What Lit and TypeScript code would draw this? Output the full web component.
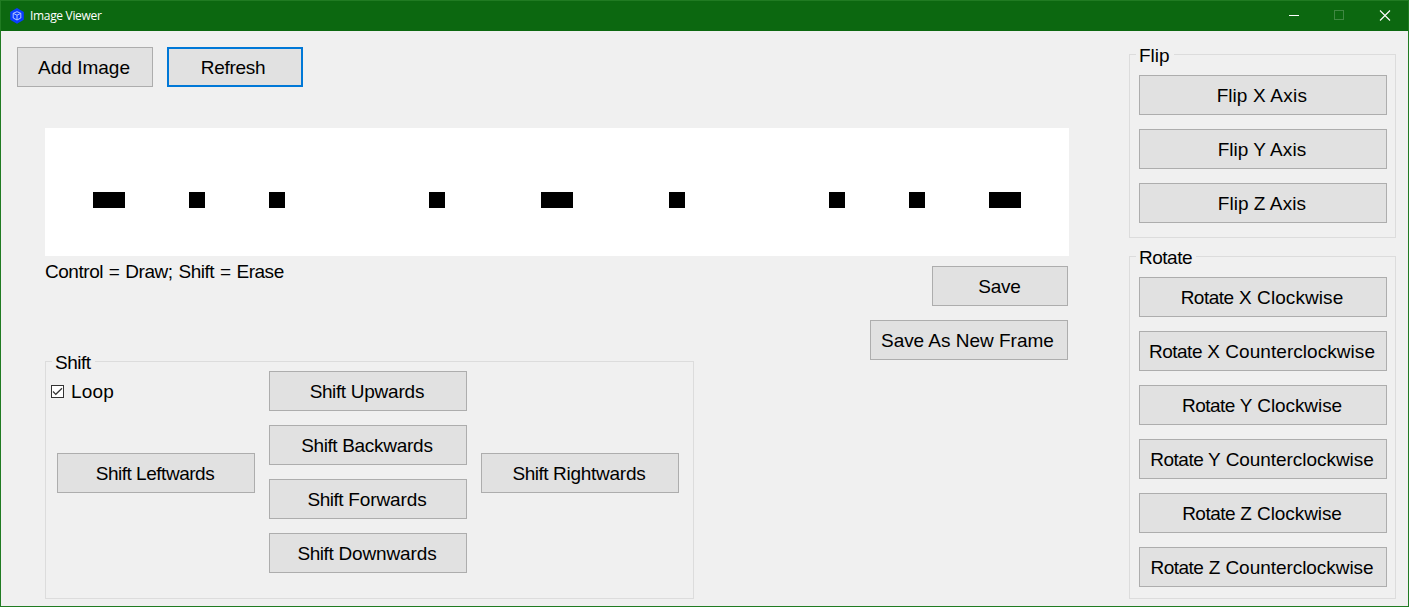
import { LitElement, html, css } from "lit";
import { customElement } from "lit/decorators.js";

/* lead is the tracking of the first word, track that of the remaining ones. */
type Label = { text: string; lead?: number; track?: number };

const flips: Label[] = [
  { text: "Flip X Axis", track: 0.25 },
  { text: "Flip Y Axis", track: 0.1 },
  { text: "Flip Z Axis", track: 0.1 },
];

const rotations: Label[] = [
  { text: "Rotate X Clockwise", lead: -0.5, track: 0.08 },
  { text: "Rotate X Counterclockwise", lead: -0.5, track: 0.05 },
  { text: "Rotate Y Clockwise", lead: -0.5, track: -0.08 },
  { text: "Rotate Y Counterclockwise", lead: -0.5, track: -0.05 },
  { text: "Rotate Z Clockwise", lead: -0.5, track: -0.08 },
  { text: "Rotate Z Counterclockwise", lead: -0.5, track: -0.05 },
];

const verticalShifts: Label[] = [
  { text: "Shift Upwards", lead: -0.45, track: -0.2 },
  { text: "Shift Backwards", lead: -0.45, track: -0.27 },
  { text: "Shift Forwards", lead: -0.45, track: -0.12 },
  { text: "Shift Downwards", lead: -0.45, track: -0.12 },
];

/* Filled cells of the 64 x 8 bitmap, as [column, row]. */
const pixels: [number, number][] = [3, 4, 9, 14, 24, 31, 32, 39, 49, 54, 59, 60].map(
  (c) => [c, 4] as [number, number]
);

@customElement("app-root")
export class AppRoot extends LitElement {
  static styles = css`
    :host {
      display: block;
      width: 1409px;
      height: 607px;
      font: 19px/22px "Liberation Sans", Arial, sans-serif;
      color: #000;
    }
    * {
      box-sizing: border-box;
    }
    .window {
      display: flex;
      flex-direction: column;
      width: 100%;
      height: 100%;
      border: 1px solid #207b22;
      background: #f0f0f0;
      overflow: hidden;
    }
    .titlebar {
      display: flex;
      align-items: center;
      height: 30px;
      flex: none;
      padding: 0 1px 0 8px;
      background: #0c6810;
      color: #fff;
    }
    .logo {
      display: block;
      width: 16px;
      height: 16px;
    }
    .title {
      margin-left: 5px;
      font: 12px/16px "Open Sans", "Noto Sans", sans-serif;
      letter-spacing: -0.32px;
      flex: 1;
    }
    .controls {
      display: flex;
      height: 30px;
    }
    .controls svg {
      display: block;
      width: 45px;
      height: 30px;
    }
    .content {
      display: flex;
      justify-content: space-between;
      flex: 1;
      padding: 16px 12px 0 16px;
    }
    .work {
      width: 1052px;
    }
    .toolbar {
      display: flex;
      gap: 14px;
    }
    button {
      display: flex;
      align-items: center;
      justify-content: center;
      height: 40px;
      padding: 2px 2px 0 0;
      margin: 0;
      border: 1px solid #adadad;
      border-radius: 0;
      background: #e1e1e1;
      color: #000;
      font: inherit;
      white-space: pre;
      flex: none;
    }
    .small {
      width: 136px;
    }
    .medium {
      width: 198px;
    }
    .wide {
      width: 248px;
    }
    .focused {
      padding-right: 4px;
      border: 2px solid #0078d7;
    }
    .bitmap {
      display: grid;
      grid-template: repeat(8, 16px) / repeat(64, 16px);
      width: 1024px;
      margin: 41px 0 0 28px;
      background: #fff;
    }
    .cell {
      background: #000;
    }
    .under {
      display: flex;
      justify-content: space-between;
      height: 104px;
      margin-left: 28px;
      width: 1023px;
    }
    .hint {
      padding-top: 5px;
      letter-spacing: -0.46px;
      word-spacing: 1px;
    }
    .saves {
      display: flex;
      flex-direction: column;
      align-items: flex-end;
      gap: 14px;
      padding-top: 10px;
    }
    .saves .small {
      padding-right: 1px;
    }
    .saves .medium {
      padding-right: 3px;
    }
    fieldset {
      margin: 0;
      padding: 0;
      border: 1px solid #dcdcdc;
      min-width: 0;
    }
    legend {
      display: block;
      height: 22px;
      margin-left: 6px;
      padding: 2px 4px 0 3px;
      letter-spacing: -0.5px;
    }
    .flip legend {
      letter-spacing: 0;
    }
    .shift {
      width: 649px;
      height: 249px;
      margin: -10px 0 0 28px;
    }
    .shift-body {
      display: grid;
      grid-template-columns: 198px 198px 198px;
      gap: 14px;
      padding-left: 11px;
      align-items: center;
      margin-top: -1px;
      height: 202px;
    }
    .shift-body > button {
      margin-top: 2px;
    }
    .left {
      display: flex;
      flex-direction: column;
      height: 202px;
    }
    .loop {
      display: flex;
      align-items: center;
      gap: 7px;
      margin: 9px 0 51px -6px;
      height: 22px;
    }
    .loop span {
      padding-top: 2px;
      letter-spacing: 0.2px;
    }
    .check {
      display: block;
      width: 13px;
      height: 13px;
    }
    .stack {
      display: flex;
      flex-direction: column;
      gap: 14px;
    }
    .side {
      width: 267px;
    }
    .side .stack {
      padding: 10px 0 0 9px;
    }
    .flip {
      height: 195px;
      margin-top: -4px;
    }
    .rotate {
      height: 354px;
      margin-top: 7px;
    }
  `;

  private button(l: Label, size: string) {
    const cut = l.text.indexOf(" ");
    const first = cut < 0 ? l.text : l.text.slice(0, cut);
    const rest = cut < 0 ? "" : l.text.slice(cut);
    return html`<button class=${size}><span style="letter-spacing:${l.lead ?? 0}px">${first}</span><span style="letter-spacing:${l.track ?? 0}px">${rest}</span></button>`;
  }

  render() {
    return html`
      <div class="window">
        <div class="titlebar">
          <svg class="logo" viewBox="0 0 16 16">
            <path d="M8 0 14.8 3.9V11.8L8 15.8 1.2 11.8V3.9Z" fill="#0a3cff" />
            <path
              d="M8 3.7 11.8 5.3V10L8 12 4.2 10V5.3Z M4.2 5.3 8 7.2 11.8 5.3 M8 7.2V12"
              fill="none"
              stroke="#b4c8ff"
              stroke-width="1"
            />
          </svg>
          <span class="title">Image Viewer</span>
          <div class="controls">
            <svg viewBox="0 0 45 30"><path d="M17 14.5H27" stroke="#fff" /></svg>
            <svg viewBox="0 0 45 30">
              <rect x="17.5" y="9.5" width="9" height="9" fill="none" stroke="#3f8742" />
            </svg>
            <svg viewBox="0 0 45 30">
              <path d="M18 9.5 28 19.5M28 9.5 18 19.5" stroke="#fff" stroke-width="1.1" />
            </svg>
          </div>
        </div>
        <div class="content">
          <div class="work">
            <div class="toolbar">
              ${this.button({ text: "Add Image" }, "small")}
              ${this.button({ text: "Refresh", lead: -0.3 }, "small focused")}
            </div>
            <div class="bitmap">
              ${pixels.map(
                ([c, r]) => html`<div class="cell" style="grid-area:${r + 1}/${c + 1}"></div>`
              )}
            </div>
            <div class="under">
              <div class="hint">Control = Draw; Shift = Erase</div>
              <div class="saves">
                ${this.button({ text: "Save", lead: -0.2 }, "small")}
                ${this.button({ text: "Save As New Frame", lead: -0.1 }, "medium")}
              </div>
            </div>
            <fieldset class="shift">
              <legend>Shift</legend>
              <div class="shift-body">
                <div class="left">
                  <div class="loop">
                    <svg class="check" viewBox="0 0 13 13">
                      <rect x=".5" y=".5" width="12" height="12" fill="#fff" stroke="#333" />
                      <path d="M2 6.5 4.8 9.3 11 3.2" fill="none" stroke="#333" stroke-width="1.2" />
                    </svg>
                    <span>Loop</span>
                  </div>
                  ${this.button({ text: "Shift Leftwards", lead: -0.5, track: -0.47 }, "medium")}
                </div>
                <div class="stack">${verticalShifts.map((l) => this.button(l, "medium"))}</div>
                ${this.button({ text: "Shift Rightwards", lead: -0.5, track: -0.27 }, "medium")}
              </div>
            </fieldset>
          </div>
          <div class="side">
            <fieldset class="flip">
              <legend>Flip</legend>
              <div class="stack">${flips.map((l) => this.button(l, "wide"))}</div>
            </fieldset>
            <fieldset class="rotate">
              <legend>Rotate</legend>
              <div class="stack">${rotations.map((l) => this.button(l, "wide"))}</div>
            </fieldset>
          </div>
        </div>
      </div>
    `;
  }
}
